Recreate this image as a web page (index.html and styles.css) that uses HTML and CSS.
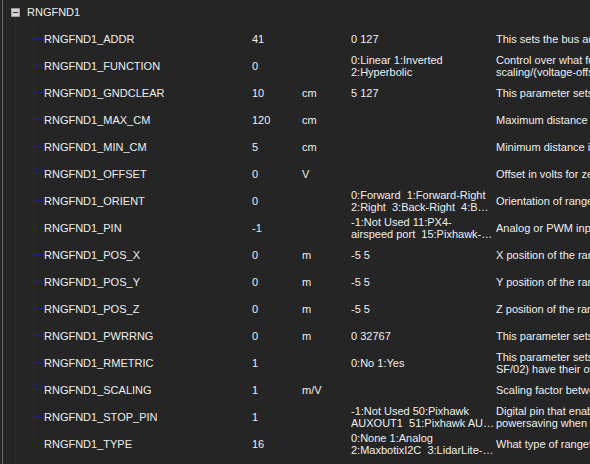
FILE: index.html
```html
<!DOCTYPE html>
<html lang="en">
<head>
    <meta charset="UTF-8">
    <meta name="viewport" content="width=device-width, initial-scale=1.0">
    <title>Parameters</title>
    <link rel="stylesheet" href="styles.css">
</head>
<body>
    <div class="frame">
        <div class="group">
            <!-- Group header -->
            <div class="group-head">
                <svg class="toggle" width="9" height="9" viewBox="0 0 9 9">
                    <rect x="0.5" y="0.5" width="8" height="8" fill="#d4d4d4" stroke="#9a9a9a"/>
                    <rect x="2" y="4" width="5" height="1" fill="#303030"/>
                </svg>
                <span>RNGFND1</span>
            </div>

            <!-- Parameter rows -->
            <div class="params">
                <div class="param">
                    <span class="name">RNGFND1_ADDR</span><span class="val">41</span><span class="unit"></span>
                    <span class="opts">0 127</span>
                    <span class="desc">This sets the bus address of the sensor, where applicable.</span>
                </div>
                <div class="param">
                    <span class="name">RNGFND1_FUNCTION</span><span class="val">0</span><span class="unit"></span>
                    <span class="opts">0:Linear 1:Inverted
2:Hyperbolic</span>
                    <span class="desc">Control over what function is used to calculate distance.<br>scaling/(voltage-offset). The functions return the distance in meters.</span>
                </div>
                <div class="param">
                    <span class="name">RNGFND1_GNDCLEAR</span><span class="val">10</span><span class="unit">cm</span>
                    <span class="opts">5 127</span>
                    <span class="desc">This parameter sets the expected range measurement.</span>
                </div>
                <div class="param">
                    <span class="name">RNGFND1_MAX_CM</span><span class="val">120</span><span class="unit">cm</span>
                    <span class="opts"></span>
                    <span class="desc">Maximum distance in centimeters that rangefinder can reliably read</span>
                </div>
                <div class="param">
                    <span class="name">RNGFND1_MIN_CM</span><span class="val">5</span><span class="unit">cm</span>
                    <span class="opts"></span>
                    <span class="desc">Minimum distance in centimeters that rangefinder can reliably read</span>
                </div>
                <div class="param">
                    <span class="name">RNGFND1_OFFSET</span><span class="val">0</span><span class="unit">V</span>
                    <span class="opts"></span>
                    <span class="desc">Offset in volts for zero distance for analog rangefinders.</span>
                </div>
                <div class="param">
                    <span class="name">RNGFND1_ORIENT</span><span class="val">0</span><span class="unit"></span>
                    <span class="opts">0:Forward  1:Forward-Right
2:Right  3:Back-Right  4:B…</span>
                    <span class="desc">Orientation of rangefinder</span>
                </div>
                <div class="param">
                    <span class="name">RNGFND1_PIN</span><span class="val">-1</span><span class="unit"></span>
                    <span class="opts">-1:Not Used 11:PX4-
airspeed port  15:Pixhawk-…</span>
                    <span class="desc">Analog or PWM input pin that rangefinder is connected to.</span>
                </div>
                <div class="param">
                    <span class="name">RNGFND1_POS_X</span><span class="val">0</span><span class="unit">m</span>
                    <span class="opts">-5 5</span>
                    <span class="desc">X position of the rangefinder in body frame.</span>
                </div>
                <div class="param">
                    <span class="name">RNGFND1_POS_Y</span><span class="val">0</span><span class="unit">m</span>
                    <span class="opts">-5 5</span>
                    <span class="desc">Y position of the rangefinder in body frame.</span>
                </div>
                <div class="param">
                    <span class="name">RNGFND1_POS_Z</span><span class="val">0</span><span class="unit">m</span>
                    <span class="opts">-5 5</span>
                    <span class="desc">Z position of the rangefinder in body frame.</span>
                </div>
                <div class="param">
                    <span class="name">RNGFND1_PWRRNG</span><span class="val">0</span><span class="unit">m</span>
                    <span class="opts">0 32767</span>
                    <span class="desc">This parameter sets the estimated terrain distance in meters.</span>
                </div>
                <div class="param">
                    <span class="name">RNGFND1_RMETRIC</span><span class="val">1</span><span class="unit"></span>
                    <span class="opts">0:No 1:Yes</span>
                    <span class="desc">This parameter sets whether an analog rangefinder is ratiometric.<br>SF/02) have their own internal voltage regulators.</span>
                </div>
                <div class="param">
                    <span class="name">RNGFND1_SCALING</span><span class="val">1</span><span class="unit">m/V</span>
                    <span class="opts"></span>
                    <span class="desc">Scaling factor between rangefinder reading and distance.</span>
                </div>
                <div class="param">
                    <span class="name">RNGFND1_STOP_PIN</span><span class="val">1</span><span class="unit"></span>
                    <span class="opts">-1:Not Used 50:Pixhawk
AUXOUT1  51:Pixhawk AU…</span>
                    <span class="desc">Digital pin that enables/disables rangefinder measurement.<br>powersaving when out of range.</span>
                </div>
                <div class="param">
                    <span class="name">RNGFND1_TYPE</span><span class="val">16</span><span class="unit"></span>
                    <span class="opts">0:None 1:Analog
2:MaxbotixI2C  3:LidarLite-…</span>
                    <span class="desc">What type of rangefinder device that is connected</span>
                </div>
            </div>
        </div>
    </div>
</body>
</html>
```

FILE: styles.css
```css
html, body {
    margin: 0;
    height: 100%;
    overflow: hidden;
}
body {
    background: #252525;
    color: #eeeeee;
    font-family: "Liberation Sans", Arial, sans-serif;
    font-size: 11px;
    line-height: 12px;
}
.frame {
    margin-left: 2px;
    height: 100%;
    border-left: 1px solid #6e6e6e;
}
.group {
    position: relative;
    height: 100%;
}
/* root tree line */
.group::before {
    content: '';
    position: absolute;
    left: 12px;
    top: 17px;
    bottom: 0;
    width: 1px;
    background: #1f1f8c;
}
.group-head {
    height: 25px;
    display: flex;
    align-items: center;
    gap: 7px;
    padding-left: 8px;
    padding-bottom: 1px;
    box-sizing: border-box;
}
.toggle {
    display: block;
}
.params {
    margin-left: 30px;
}
.param {
    position: relative;
    height: 27px;
    display: grid;
    grid-template-columns: 208px 50px 49px 145px 1fr;
    align-items: center;
    padding-left: 11px;
}
/* tree connectors */
.param::before {
    content: '';
    position: absolute;
    left: 0;
    top: 0;
    bottom: 0;
    width: 1px;
    background: #1f1f8c;
}
.param:last-child::before {
    bottom: 13px;
}
.param::after {
    content: '';
    position: absolute;
    left: 0;
    top: 13px;
    width: 10px;
    height: 1px;
    background: #1f1f8c;
}
.opts {
    white-space: pre;
    overflow: hidden;
}
.desc {
    white-space: nowrap;
    overflow: hidden;
}
```
